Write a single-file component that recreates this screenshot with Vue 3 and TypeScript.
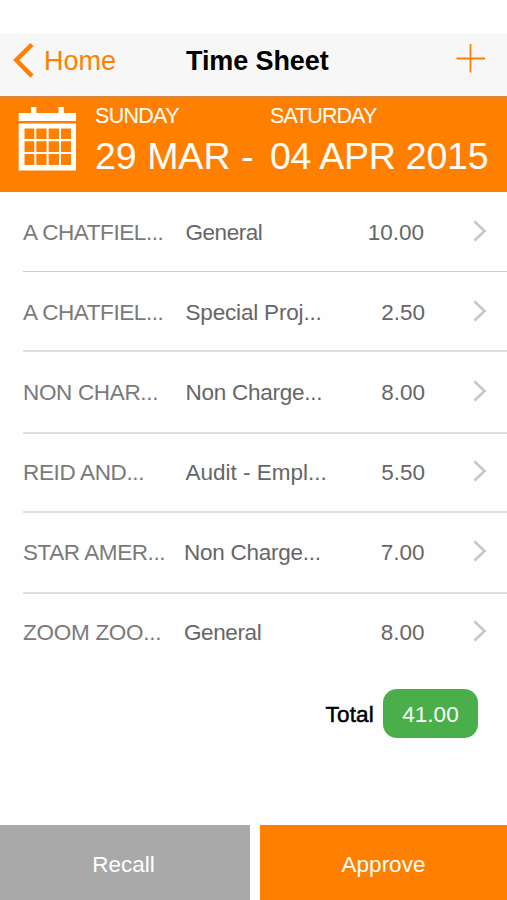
<script setup lang="ts">
interface Entry {
  client: string
  task: string
  hours: string
  clientTracking: number
  taskTracking: number
}

const entries: Entry[] = [
  { client: 'A CHATFIEL...', task: 'General', hours: '10.00', clientTracking: -0.42, taskTracking: -0.45 },
  { client: 'A CHATFIEL...', task: 'Special Proj...', hours: '2.50', clientTracking: -0.42, taskTracking: -0.18 },
  { client: 'NON CHAR...', task: 'Non Charge...', hours: '8.00', clientTracking: -0.33, taskTracking: -0.25 },
  { client: 'REID AND...', task: 'Audit - Empl...', hours: '5.50', clientTracking: -0.35, taskTracking: 0 },
  { client: 'STAR AMER...', task: 'Non Charge...', hours: '7.00', clientTracking: -0.42, taskTracking: -0.25 },
  { client: 'ZOOM ZOO...', task: 'General', hours: '8.00', clientTracking: -0.27, taskTracking: -0.4 },
]
</script>

<template>
  <main class="screen">
    <header class="nav">
      <button class="back" type="button">
        <svg class="back-icon" width="21" height="36" viewBox="0 0 21 36">
          <path d="M19 1.5 3.2 17.1 19 33.1" fill="none" stroke="#ff8000" stroke-width="4.4" />
        </svg>
        <span>Home</span>
      </button>
      <h1 class="title">Time Sheet</h1>
      <svg class="add" width="30" height="30" viewBox="0 0 30 30">
        <path d="M0.5 14.5H29M14.5 0V28.5" fill="none" stroke="#ff8000" stroke-width="1.8" />
      </svg>
    </header>

    <section class="period">
      <svg class="calendar" width="58" height="66" viewBox="0 0 58 66">
        <path fill="#fff" d="M0.7 7H13V1H18.3V7H40.5V1H45.8V7H58V15H0.7Z" />
        <path
          fill="#fff"
          fill-rule="evenodd"
          d="M0.7 17.5H58V64.5H0.7ZM6.5 22.5V33H16.3V22.5ZM18.3 22.5V33H28.6V22.5ZM30.6 22.5V33H41V22.5ZM43 22.5V33H53V22.5ZM6.5 35.2V46H16.3V35.2ZM18.3 35.2V46H28.6V35.2ZM30.6 35.2V46H41V35.2ZM43 35.2V46H53V35.2ZM6.5 48V59H16.3V48ZM18.3 48V59H28.6V48ZM30.6 48V59H41V48ZM43 48V59H53V48Z"
        />
      </svg>
      <div class="day from">
        <span class="weekday">SUNDAY</span>
        <span class="date">29 MAR -</span>
      </div>
      <div class="day to">
        <span class="weekday">SATURDAY</span>
        <span class="date">04 APR 2015</span>
      </div>
    </section>

    <ul class="entries">
      <li v-for="(entry, i) in entries" :key="i" class="entry">
        <span class="client" :style="{ letterSpacing: entry.clientTracking + 'px' }">{{ entry.client }}</span>
        <span class="task" :style="{ letterSpacing: entry.taskTracking + 'px' }">{{ entry.task }}</span>
        <span class="hours">{{ entry.hours }}</span>
        <svg class="chevron" width="14" height="22" viewBox="0 0 14 22">
          <path d="M1.5 1.5 11.5 11 1.5 20.5" fill="none" stroke="#c6c6c6" stroke-width="2.6" />
        </svg>
      </li>
    </ul>

    <section class="summary">
      <span class="total-label">Total</span>
      <span class="total">41.00</span>
    </section>

    <footer class="actions">
      <button class="action recall" type="button">Recall</button>
      <button class="action approve" type="button">Approve</button>
    </footer>
  </main>
</template>

<style>
body {
  background: #fefefe;
}
</style>

<style scoped>
.screen {
  display: flex;
  flex-direction: column;
  box-sizing: border-box;
  width: 507px;
  height: 900px;
  padding-top: 34px;
  overflow: hidden;
  background: #fefefe;
  font-family: 'Liberation Sans', Arial, sans-serif;
  font-size: 22.5px;
  white-space: nowrap;
}

button {
  margin: 0;
  padding: 0;
  border: 0;
  background: none;
  font: inherit;
}

.nav {
  display: grid;
  grid-template-columns: 185px 1fr 51px;
  flex: none;
  box-sizing: border-box;
  height: 62px;
  background: #f7f7f7;
}

.back {
  display: flex;
  align-items: center;
  height: 53px;
  padding-left: 13px;
  color: #ff8000;
  font-size: 27px;
}

.back span {
  padding-top: 2px;
}

.back-icon {
  margin-right: 10px;
}

.title {
  margin: 0;
  padding-left: 1px;
  color: #000;
  font-size: 27px;
  font-weight: 700;
  line-height: 54px;
  letter-spacing: -0.1px;
}

.add {
  margin-top: 10px;
}

.period {
  display: grid;
  grid-template-columns: 77px 175px 1fr;
  flex: none;
  box-sizing: border-box;
  height: 96px;
  padding-left: 18px;
  border-top: 1px solid #d28a48;
  background: #ff8000;
  color: #fff;
}

.calendar {
  margin-top: 9px;
}

.day {
  display: flex;
  flex-direction: column;
}

.weekday {
  margin-top: 7px;
  font-size: 21.5px;
  line-height: 24px;
  letter-spacing: -0.7px;
}

.to .weekday {
  letter-spacing: -0.95px;
}

.date {
  font-size: 37.5px;
  line-height: 56px;
  letter-spacing: -0.25px;
}

.from .date {
  letter-spacing: 0;
}

.entries {
  flex: none;
  height: 482px;
  margin: 0;
  padding: 0 0 0 23px;
  list-style: none;
}

.entry {
  display: grid;
  grid-template-columns: 162.5px 179.5px 60px 1fr;
  box-sizing: border-box;
  height: 80px;
  padding-top: 28px;
  border-bottom: 2px solid #dedede;
  color: #666;
  line-height: 26px;
}

.entry:nth-child(1) {
  border-bottom-width: 1px;
  border-bottom-color: #cfcfcf;
}

.entry:nth-child(3) {
  height: 82px;
}

.entry:nth-child(4) {
  height: 79px;
  padding-top: 26px;
}

.entry:nth-child(5) {
  height: 81px;
  padding-top: 27px;
}

.entry:nth-child(6) {
  padding-top: 26px;
  border-bottom: 0;
}

.entry:nth-child(n + 5) {
  grid-template-columns: 161px 181px 59.5px 1fr;
}

.client {
  color: #7a7a7a;
}

.hours {
  text-align: right;
}

.entry:nth-child(1) .hours {
  margin-right: 1px;
}

.chevron {
  justify-self: end;
  margin: 0 20px 0 0;
}

.summary {
  display: flex;
  align-items: center;
  justify-content: flex-end;
  flex: none;
  height: 49px;
  margin-top: 15px;
  padding-right: 29px;
}

.total-label {
  margin-right: 9px;
  padding-top: 2px;
  color: #000;
  letter-spacing: 0.2px;
  -webkit-text-stroke: 0.5px #000;
}

.total {
  box-sizing: border-box;
  width: 95px;
  height: 49px;
  padding-top: 1px;
  border-radius: 14px;
  background: #4aae4a;
  color: #fff;
  line-height: 49px;
  text-align: center;
}

.actions {
  display: grid;
  grid-template-columns: 250px 247px;
  gap: 10px;
  height: 75px;
  margin-top: auto;
}

.action {
  padding-top: 5px;
  color: #fff;
}

.recall {
  padding-right: 3px;
  background: #a9a9a9;
}

.approve {
  background: #ff8000;
}
</style>
